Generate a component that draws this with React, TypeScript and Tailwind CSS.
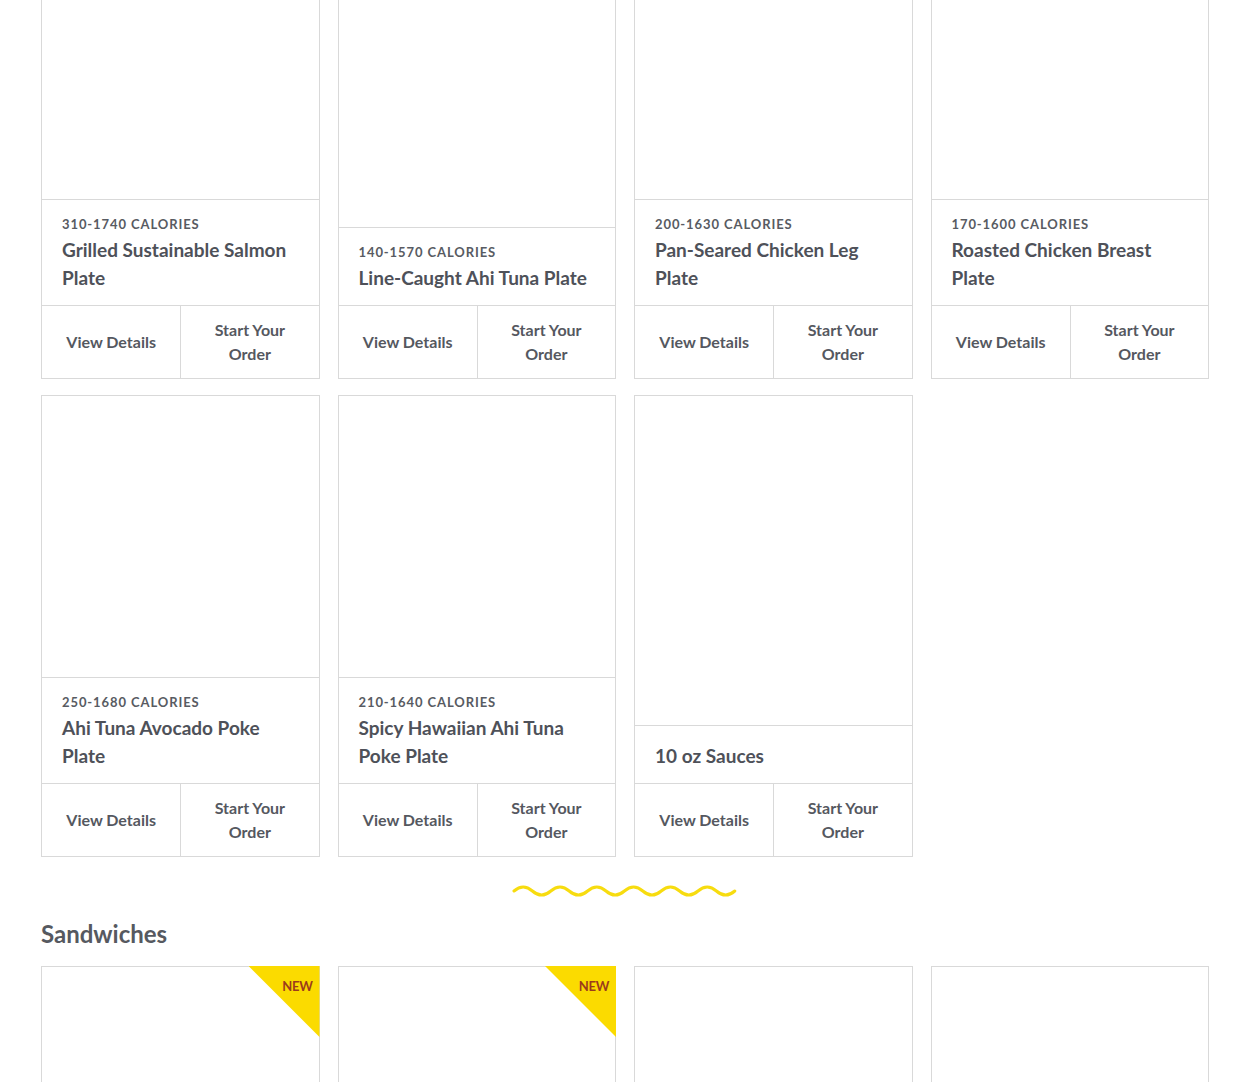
import React from "react";

interface Item {
  calories?: string;
  name: string;
  isNew?: boolean;
}

const plates: Item[] = [
  { calories: "310-1740 CALORIES", name: "Grilled Sustainable Salmon Plate" },
  { calories: "140-1570 CALORIES", name: "Line-Caught Ahi Tuna Plate" },
  { calories: "200-1630 CALORIES", name: "Pan-Seared Chicken Leg Plate" },
  { calories: "170-1600 CALORIES", name: "Roasted Chicken Breast Plate" },
  { calories: "250-1680 CALORIES", name: "Ahi Tuna Avocado Poke Plate" },
  { calories: "210-1640 CALORIES", name: "Spicy Hawaiian Ahi Tuna Poke Plate" },
  { name: "10 oz Sauces" },
];

const sandwiches: Item[] = [
  { name: "", isNew: true },
  { name: "", isNew: true },
  { name: "" },
  { name: "" },
];

// squiggle divider, 6 full waves
function wavePath() {
  let d = "M3 7";
  for (let i = 0; i < 12; i++) {
    d += i === 0 ? " q9.2 -8 18.4 0" : " t18.4 0";
  }
  return d;
}

function MenuCard({ item }: { item: Item }) {
  return (
    <div className="flex flex-col border border-[#d9d9d9] bg-white">
      <div className="flex-1 min-h-[281px]" />
      <div className="border-t border-[#d9d9d9] px-5 pt-4 pb-[13px]">
        {item.calories && (
          <p className="mb-1 text-[13px] leading-4 font-bold tracking-[0.07em] text-[#585b62]">
            {item.calories}
          </p>
        )}
        <h3 className="text-[19px] leading-7 font-bold text-[#4e5159]">{item.name}</h3>
      </div>
      <div className="grid grid-cols-2 border-t border-[#d9d9d9] h-[73px]">
        <button className="flex items-center justify-center text-[16px] leading-6 font-bold text-[#55585f]">
          View Details
        </button>
        <button className="flex items-center justify-center border-l border-[#d9d9d9] px-6 text-center text-[16px] leading-6 font-bold text-[#55585f]">
          Start Your Order
        </button>
      </div>
    </div>
  );
}

function SandwichCard({ item }: { item: Item }) {
  return (
    <div className="relative h-[300px] border border-[#d9d9d9] bg-white">
      {item.isNew && (
        <div className="absolute -top-px -right-px h-[71px] w-[71px] bg-[#fbdb00] [clip-path:polygon(0_0,100%_0,100%_100%)]">
          <span className="absolute top-[12px] right-[7px] text-[13px] leading-4 font-bold tracking-tight text-[#9b3b1c]">
            NEW
          </span>
        </div>
      )}
    </div>
  );
}

export default function App() {
  return (
    <div className="min-h-screen overflow-hidden bg-white font-['Lato',sans-serif]">
      <div className="mx-auto -mt-[83px] w-[1168px]">
        <div className="grid grid-cols-4 gap-x-[18px] gap-y-4">
          {plates.map((p) => (
            <MenuCard key={p.name} item={p} />
          ))}
        </div>

        <div className="mt-[27px] flex justify-center">
          <svg width="228" height="14" viewBox="0 0 228 14" fill="none">
            <path d={wavePath()} stroke="#f7dc0f" strokeWidth="3" strokeLinecap="round" />
          </svg>
        </div>

        <h2 className="mt-[20px] mb-4 text-[24px] leading-8 font-bold text-[#565960]">Sandwiches</h2>

        <div className="grid grid-cols-4 gap-x-[18px]">
          {sandwiches.map((s, i) => (
            <SandwichCard key={i} item={s} />
          ))}
        </div>
      </div>
    </div>
  );
}
